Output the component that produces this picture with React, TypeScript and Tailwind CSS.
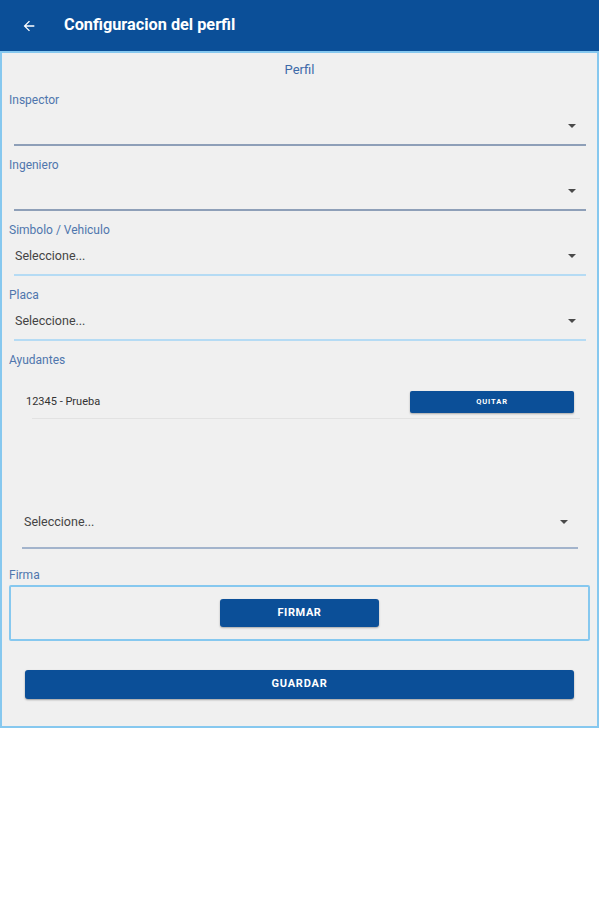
import React from "react";

const Caret = () => (
  <svg width="8" height="4" viewBox="0 0 8 4" className="shrink-0">
    <polygon points="0,0 8,0 4,4" fill="#4a4a4a" />
  </svg>
);

function Field({ label, value, line }: { label: string; value?: string; line: string }) {
  return (
    <div className="flex flex-col">
      <div className="h-[14px] pl-[7px] text-[12px] leading-[14px] text-[#4f76ad]">{label}</div>
      <div className={`ml-[12px] mr-[11px] flex h-[39px] items-center justify-between border-b-2 pl-[1px] pr-[10px] ${line}`}>
        <span className="pt-[2px] text-[12.5px] text-[#444444]">{value ?? ""}</span>
        <Caret />
      </div>
    </div>
  );
}

export default function App() {
  return (
    <div className="w-[599px] min-h-[900px] bg-white" style={{ fontFamily: "Roboto, 'Noto Sans', sans-serif" }}>
      <header className="flex h-[51px] items-center bg-[#0b4f98]">
        <svg width="16" height="16" viewBox="0 0 24 24" className="ml-[21px]">
          <path d="M20 11H7.83l5.59-5.59L12 4l-8 8 8 8 1.41-1.41L7.83 13H20v-2z" fill="#ffffff" />
        </svg>
        <h1 className="ml-[27px] text-[16.3px] font-bold text-white">Configuracion del perfil</h1>
      </header>
      <main className="h-[677px] border-2 border-[#86c8ef] bg-[#f0f0f0]">
        <div className="mt-[9px] h-[16px] text-center text-[13px] leading-[16px] text-[#3d6aa9]">Perfil</div>
        <div className="mt-[15px] flex flex-col gap-[12px]">
          <Field label="Inspector" line="border-[#8e9fb8]" />
          <Field label="Ingeniero" line="border-[#8e9fb8]" />
          <Field label="Simbolo / Vehiculo" value="Seleccione..." line="border-[#b5dbf4]" />
          <Field label="Placa" value="Seleccione..." line="border-[#b5dbf4]" />
          <div className="h-[14px] pl-[7px] text-[12px] leading-[14px] text-[#4f76ad]">Ayudantes</div>
        </div>
        <div className="mt-[24px] flex h-[22px] items-center justify-between pl-[24px] pr-[23px]">
          <span className="text-[11px] text-[#333333]">12345 - Prueba</span>
          <button className="flex h-[22px] w-[164px] items-center justify-center rounded-[2px] bg-[#0b4f98] text-[7.5px] font-bold tracking-[0.9px] text-white shadow-[0_1px_2px_rgba(0,0,0,0.3)]">
            QUITAR
          </button>
        </div>
        <div className="ml-[30px] mr-[17px] mt-[5px] h-px bg-[#e2e2e2]" />
        <div className="ml-[20px] mr-[19px] mt-[78px] flex h-[52px] items-center justify-between border-b-2 border-[#a3b4cc] pl-[2px] pr-[10px]">
          <span className="text-[12.5px] text-[#444444]">Seleccione...</span>
          <Caret />
        </div>
        <div className="mt-[19px] h-[14px] pl-[7px] text-[12px] leading-[14px] text-[#4f76ad]">Firma</div>
        <div className="mx-[7px] mt-[3px] flex h-[56px] items-center justify-center rounded-[2px] border-2 border-[#86c8ef]">
          <button className="flex h-[28px] w-[159px] items-center justify-center rounded-[3px] bg-[#0b4f98] text-[11px] font-bold tracking-[0.6px] text-white shadow-[0_1px_2px_rgba(0,0,0,0.3)]">
            FIRMAR
          </button>
        </div>
        <div className="px-[23px] pt-[29px]">
          <button className="flex h-[29px] w-full items-center justify-center rounded-[3px] bg-[#0b4f98] text-[11px] font-bold tracking-[0.8px] text-white shadow-[0_1px_2px_rgba(0,0,0,0.35)]">
            GUARDAR
          </button>
        </div>
      </main>
    </div>
  );
}
